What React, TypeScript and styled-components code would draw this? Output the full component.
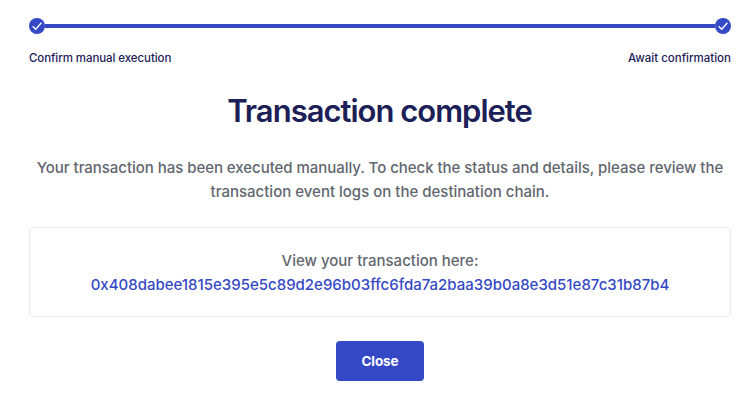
import React from 'react';
import styled, { createGlobalStyle } from 'styled-components';

const GlobalStyle = createGlobalStyle`
  * { box-sizing: border-box; }
  body {
    margin: 0;
    background: #fff;
    font-family: Inter, "Liberation Sans", sans-serif;
    font-weight: 500;
    -webkit-font-smoothing: antialiased;
  }
`;

const Page = styled.main`
  display: flex;
  flex-direction: column;
  align-items: center;
  height: 404px;
  padding: 18px 23px 0 29px;
`;

const Stepper = styled.div`
  display: flex;
  align-items: center;
  width: 100%;
  height: 16px;
`;

const StepDot = styled.span`
  display: flex;
  flex: none;
  width: 16px;
  height: 16px;
  border-radius: 50%;
  background: #3549c6;
`;

const StepLine = styled.span`
  flex: 1;
  height: 4px;
  background: #3549c6;
`;

const StepLabels = styled.div`
  display: flex;
  justify-content: space-between;
  width: 100%;
  margin-top: 16px;
  color: #1c2057;
  font-size: 11.5px;
  line-height: 16px;
`;

const Text = styled.span<{ $spacing: number }>`
  white-space: nowrap;
  letter-spacing: ${(p) => p.$spacing}px;
  margin-right: ${(p) => -p.$spacing}px;
`;

const Title = styled.h1`
  margin: 25px 0 0;
  color: #1c2057;
  font-size: 31px;
  font-weight: 600;
  line-height: 40px;
`;

const Message = styled.p`
  display: flex;
  flex-direction: column;
  align-items: center;
  margin: 25px 0 0;
  color: #62666f;
  font-size: 15px;
  line-height: 24px;
`;

const Card = styled.section`
  display: flex;
  flex-direction: column;
  align-items: center;
  width: 100%;
  height: 90px;
  margin-top: 23px;
  padding-top: 21px;
  border: 1px solid #e9eaed;
  border-radius: 4px;
  color: #62666f;
  font-size: 15px;
  line-height: 24px;
`;

const HashLink = styled.a`
  color: #3549c6;
  text-decoration: none;
`;

const Button = styled.button`
  width: 88px;
  height: 40px;
  margin-top: 24px;
  padding: 0;
  border: 0;
  border-radius: 4px;
  background: #3549c6;
  color: #fff;
  font: 700 13.5px/20px Inter, "Liberation Sans", sans-serif;
`;

function CompletedStep() {
  return (
    <StepDot>
      <svg width="16" height="16" viewBox="0 0 16 16" fill="none">
        <path d="M3.7 8.2 6.7 11.2 12.4 4.8" stroke="#fff" strokeWidth="1.3" />
      </svg>
    </StepDot>
  );
}

export default function App() {
  return (
    <>
      <GlobalStyle />
      <Page>
        <Stepper>
          <CompletedStep />
          <StepLine />
          <CompletedStep />
        </Stepper>
        <StepLabels>
          <Text $spacing={-0.08}>Confirm manual execution</Text>
          <Text $spacing={0}>Await confirmation</Text>
        </StepLabels>
        <Title>
          <Text $spacing={-1}>Transaction complete</Text>
        </Title>
        <Message>
          <Text $spacing={-0.04}>
            Your transaction has been executed manually. To check the status and details, please review the
          </Text>
          <Text $spacing={0}>transaction event logs on the destination chain.</Text>
        </Message>
        <Card>
          <Text $spacing={0}>View your transaction here:</Text>
          <HashLink href="#">
            <Text $spacing={0}>0x408dabee1815e395e5c89d2e96b03ffc6fda7a2baa39b0a8e3d51e87c31b87b4</Text>
          </HashLink>
        </Card>
        <Button type="button">
          <Text $spacing={-0.1}>Close</Text>
        </Button>
      </Page>
    </>
  );
}
